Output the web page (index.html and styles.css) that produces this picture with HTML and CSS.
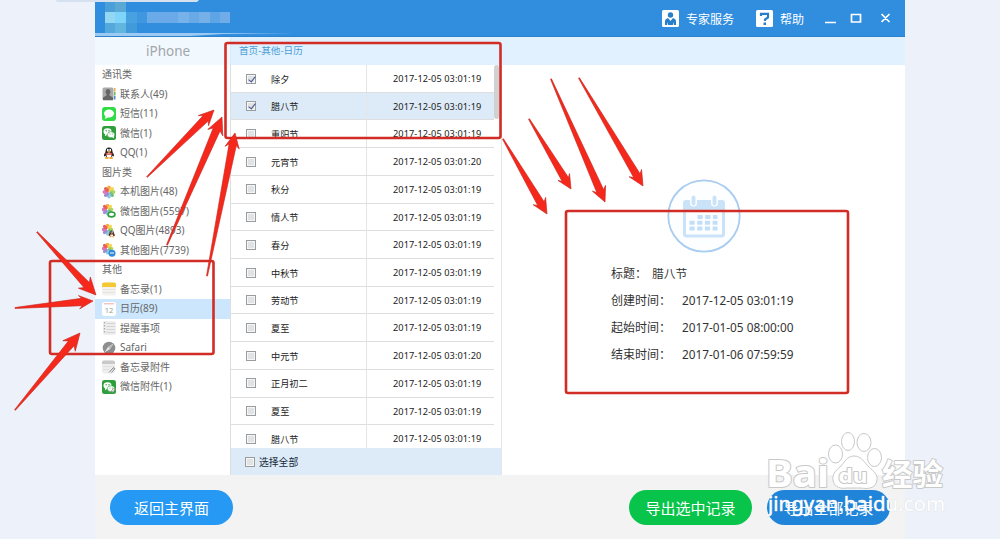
FILE: index.html
```html
<!DOCTYPE html>
<html lang="zh-CN">
<head>
<meta charset="utf-8">
<title>iPhone - 日历</title>
<link rel="stylesheet" href="styles.css">
</head>
<body>
<svg width="0" height="0" class="defs">
  <defs>
    <symbol id="contacts" viewBox="0 0 14 14"><rect x="0.5" y="0.5" width="11" height="13" rx="1.5" fill="#aaa"/><path d="M6 2a2.6 2.8 0 0 1 1.5 5v1.5l3.5 2V13H1v-2.500l3.500-2V7A2.600 2.800 0 0 1 6 2z" fill="#666"/><path d="M12 1h1.500v3.500H12z" fill="#e2b04a"/><path d="M12 5h1.500v3.500H12z" fill="#6db85d"/><path d="M12 9h1.500v3.500H12z" fill="#4a90c8"/></symbol>
    <symbol id="sms" viewBox="0 0 14 14"><rect width="14" height="14" rx="3" fill="#2fdc43"/><ellipse cx="7" cy="6.500" rx="5" ry="4" fill="#fff"/><path d="M3.500 9 3 12l3.500-2z" fill="#fff"/></symbol>
    <symbol id="wechat" viewBox="0 0 14 14"><rect width="14" height="14" rx="2.500" fill="#2e9f3c"/><ellipse cx="5.500" cy="5.500" rx="4" ry="3.300" fill="#fff"/><path d="M3 8v2.200L5.500 8.500z" fill="#fff"/><ellipse cx="9" cy="8.700" rx="3.700" ry="3" fill="#fff" stroke="#2e9f3c" stroke-width=".6"/><path d="M10 11l2 1.300V10z" fill="#fff"/><g fill="#2e9f3c"><circle cx="4.200" cy="4.800" r=".7"/><circle cx="7" cy="4.800" r=".7"/><circle cx="8" cy="8" r=".5"/><circle cx="10.300" cy="8" r=".5"/></g></symbol>
    <symbol id="qq" viewBox="0 0 14 14"><path d="M7 1.500c-2.600 0-3.600 2-3.500 4.500C2 8 1.700 9.500 2.200 10.500L3.500 9.800c.5 2 6.500 2 7 0l1.300.7c.5-1 .2-2.500-1.300-4.500.1-2.500-.9-4.500-3.500-4.500z" fill="#222"/><ellipse cx="7" cy="9" rx="2.500" ry="2.500" fill="#fff"/><path d="M3.500 6.500q3.500 2 7 0v1.400q-3.500 1.800-7 0z" fill="#e33b2e"/><ellipse cx="5.800" cy="4" rx=".9" ry="1.200" fill="#fff"/><ellipse cx="8.200" cy="4" rx=".9" ry="1.200" fill="#fff"/><ellipse cx="7" cy="5.700" rx="1.900" ry=".6" fill="#f6a623"/><ellipse cx="4.800" cy="12" rx="2" ry=".9" fill="#f6a623"/><ellipse cx="9.200" cy="12" rx="2" ry=".9" fill="#f6a623"/></symbol>
    <symbol id="photos" viewBox="0 0 14 14"><g opacity=".88"><ellipse cx="7" cy="3.500" rx="1.900" ry="2.900" fill="#f5a229"/><ellipse cx="7" cy="3.500" rx="1.900" ry="2.900" fill="#f3d13c" transform="rotate(45 7 7)"/><ellipse cx="7" cy="3.500" rx="1.900" ry="2.900" fill="#a5ce4a" transform="rotate(90 7 7)"/><ellipse cx="7" cy="3.500" rx="1.900" ry="2.900" fill="#55b96d" transform="rotate(135 7 7)"/><ellipse cx="7" cy="3.500" rx="1.900" ry="2.900" fill="#7cc2df" transform="rotate(180 7 7)"/><ellipse cx="7" cy="3.500" rx="1.900" ry="2.900" fill="#8a7fcf" transform="rotate(225 7 7)"/><ellipse cx="7" cy="3.500" rx="1.900" ry="2.900" fill="#d266b5" transform="rotate(270 7 7)"/><ellipse cx="7" cy="3.500" rx="1.900" ry="2.900" fill="#ea4b45" transform="rotate(315 7 7)"/></g></symbol>
    <symbol id="wxphotos" viewBox="0 0 14 14"><use href="#photos" x="-1" y="-1" width="13" height="13"/><ellipse cx="9.500" cy="10.500" rx="4.200" ry="3.200" fill="#2e9f3c"/><ellipse cx="9.500" cy="10.300" rx="2.700" ry="1.600" fill="#fff"/></symbol>
    <symbol id="qqphotos" viewBox="0 0 14 14"><use href="#photos" x="-1" y="-1" width="13" height="13"/><use href="#qq" x="5.500" y="5.500" width="8.500" height="8.500"/></symbol>
    <symbol id="otherphotos" viewBox="0 0 14 14"><use href="#photos" x="-1" y="-1" width="13" height="13"/><circle cx="10" cy="10.200" r="3.500" fill="#2f8bd8"/><path d="M8 9.500h4v1H8zM9 11.500h2" fill="#fff"/></symbol>
    <symbol id="notes" viewBox="0 0 14 14"><rect y=".5" width="14" height="13" rx="2" fill="#f4f2ed"/><path d="M0 5V2.500A2 2 0 0 1 2 .5h10a2 2 0 0 1 2 2V5z" fill="#f3c833"/><path d="M1 7.500h12M1 10.500h12" stroke="#ddd" stroke-width=".7"/></symbol>
    <symbol id="calendar" viewBox="0 0 14 14"><rect width="14" height="14" rx="2.500" fill="#fff"/><path d="M2 1.800h10" stroke="#efaaa5"/><text x="7" y="11" text-anchor="middle" class="cal-number">12</text></symbol>
    <symbol id="reminders" viewBox="0 0 14 14"><rect x="1" width="13" height="14" rx="2" fill="#eee"/><path d="M4.500 2.500H13M4.500 5.500H13M4.500 8.500H13M4.500 11.500H13" stroke="#ccc" stroke-width=".8"/><path d="M2.500 1v12" stroke="#aaa" stroke-width="1.300" stroke-dasharray="1.500 1.500"/></symbol>
    <symbol id="safari" viewBox="0 0 14 14"><circle cx="7" cy="7" r="6.300" fill="#8e8e8e"/><path d="M11.500 2.500 8 8 2.500 11.500 6 6z" fill="#e8e8e8"/><path d="M6 6l2 2 3.500-5.500z" fill="#bbb"/></symbol>
    <symbol id="noteclip" viewBox="0 0 14 14"><rect y=".5" width="13" height="13" rx="2" fill="#eee"/><path d="M0 4V2.500A2 2 0 0 1 2 .5h9a2 2 0 0 1 2 2V4z" fill="#c9c9c9"/><path d="M1 6.500h11M1 9.500h6" stroke="#d8d8d8" stroke-width=".7"/><path d="m7 12.500 4-4.500q1.500-.8 1.800.8L9.500 12.500" fill="none" stroke="#888"/></symbol>
    <symbol id="wxclip" viewBox="0 0 14 14"><use href="#wechat" width="14" height="14"/><path d="m8 12.500 3.500-4q1.500-.8 1.800.8L10.500 12.500" fill="none" stroke="#999"/></symbol>
  </defs>
</svg>

<div class="app">
  <header class="titlebar">
    <svg class="brand" width="202" height="37" viewBox="0 0 202 37">
      <path d="M10 0h10v12H10z" fill="#4a9fd9"/><path d="M20 0h11v12H20z" fill="#59a9d4"/>
      <path d="M10 12h10v11H10z" fill="#94d7f2"/><path d="M20 12h11v11H20z" fill="#7fd4fb"/>
      <path d="M31 12h11v11H31z" fill="#48a2e2"/><path d="M42 12h10v11H42z" fill="#3f98df"/>
      <path d="M52 12h31v11H52z" fill="#6aaae9"/><path d="M83 12h11v11H83z" fill="#77b2ea"/><path d="M94 12h10v11H94z" fill="#69aae6"/><path d="M104 12h11v11h-11z" fill="#75b0e9"/><path d="M115 12h10v11h-10z" fill="#5ea5e5"/><path d="M125 12h10v11h-10z" fill="#70ade8"/>
      <path d="M10 23h10v10H10z" fill="#53a8dc"/><path d="M20 23h11v10H20z" fill="#62b5df"/><path d="M31 23h11v10H31z" fill="#419ada"/>
      <path d="M0 33h200l-72 1-33 2H0z" fill="#9dcaf2"/>
    </svg>
    <nav class="actions">
      <svg width="17" height="17" viewBox="0 0 17 17"><rect width="17" height="17" rx="1.500" fill="#fff"/><circle cx="8.500" cy="5" r="2.700" fill="#277fc9"/><path d="M3 15V11q0-2 3-3l2.500 3L11 8q3 1 3 3v4h-2v-3l-1 3H6l-1-3v3z" fill="#277fc9"/></svg>
      <span class="expert">专家服务</span>
      <svg width="17" height="17" viewBox="0 0 17 17"><rect width="17" height="17" rx="1.500" fill="#fff"/><path d="M5 6V3.800h7v3.700L9 9.500V11" fill="none" stroke="#277fc9" stroke-width="2.200"/><path d="M7.500 12.500H10V15H7.500z" fill="#277fc9"/></svg>
      <span class="help">帮助</span>
      <svg class="window-controls" width="70" height="16" viewBox="0 0 70 16" fill="none" stroke="#fff" stroke-width="1.700"><path d="M1 11.500h11M27.500 3.500h9v7.500h-9zM57.500 3l8 8M65.500 3l-8 8"/></svg>
    </nav>
  </header>
  <div class="crumbs"><div class="device">iPhone</div><div class="path">首页-其他-日历</div></div>
  <main class="content">
    <aside class="sidebar">
      <h2>通讯类</h2>
      <a><svg><use href="#contacts"/></svg>联系人(49)</a>
      <a><svg><use href="#sms"/></svg>短信(11)</a>
      <a><svg><use href="#wechat"/></svg>微信(1)</a>
      <a><svg><use href="#qq"/></svg>QQ(1)</a>
      <h2>图片类</h2>
      <a><svg><use href="#photos"/></svg>本机图片(48)</a>
      <a><svg><use href="#wxphotos"/></svg>微信图片(5597)</a>
      <a><svg><use href="#qqphotos"/></svg>QQ图片(4893)</a>
      <a><svg><use href="#otherphotos"/></svg>其他图片(7739)</a>
      <h2>其他</h2>
      <a><svg><use href="#notes"/></svg>备忘录(1)</a>
      <a class="active"><svg><use href="#calendar"/></svg>日历(89)</a>
      <a><svg><use href="#reminders"/></svg>提醒事项</a>
      <a><svg><use href="#safari"/></svg>Safari</a>
      <a><svg><use href="#noteclip"/></svg>备忘录附件</a>
      <a><svg><use href="#wxclip"/></svg>微信附件(1)</a>
    </aside>
    <section class="records">
      <div class="list">
        <div class="rows">
          <div class="row"><i class="check on"></i><b>除夕</b><time>2017-12-05 03:01:19</time></div>
          <div class="row selected"><i class="check on"></i><b>腊八节</b><time>2017-12-05 03:01:19</time></div>
          <div class="row"><i class="check"></i><b>重阳节</b><time>2017-12-05 03:01:19</time></div>
          <div class="row"><i class="check"></i><b>元宵节</b><time>2017-12-05 03:01:20</time></div>
          <div class="row"><i class="check"></i><b>秋分</b><time>2017-12-05 03:01:19</time></div>
          <div class="row"><i class="check"></i><b>情人节</b><time>2017-12-05 03:01:19</time></div>
          <div class="row"><i class="check"></i><b>春分</b><time>2017-12-05 03:01:19</time></div>
          <div class="row"><i class="check"></i><b>中秋节</b><time>2017-12-05 03:01:19</time></div>
          <div class="row"><i class="check"></i><b>劳动节</b><time>2017-12-05 03:01:19</time></div>
          <div class="row"><i class="check"></i><b>夏至</b><time>2017-12-05 03:01:19</time></div>
          <div class="row"><i class="check"></i><b>中元节</b><time>2017-12-05 03:01:20</time></div>
          <div class="row"><i class="check"></i><b>正月初二</b><time>2017-12-05 03:01:19</time></div>
          <div class="row"><i class="check"></i><b>夏至</b><time>2017-12-05 03:01:19</time></div>
          <div class="row"><i class="check"></i><b>腊八节</b><time>2017-12-05 03:01:19</time></div>
        </div>
        <div class="scrollbar"></div>
      </div>
      <div class="select-all"><i class="check"></i>选择全部</div>
    </section>
    <section class="detail">
      <svg class="emblem" width="74" height="74" viewBox="0 0 74 74"><circle cx="37" cy="37" r="35.700" fill="#fcfeff" stroke="#a9cdf0" stroke-width="1.800"/><rect x="17.500" y="23" width="39" height="34" rx="2" fill="none" stroke="#cbe3f8" stroke-width="3"/><path d="M16 31v-7q0-3 3-3h36q3 0 3 3v7z" fill="#cbe3f8"/><g stroke-linecap="round"><path d="M26.500 19v5M47.500 19v5" stroke="#fcfeff" stroke-width="7"/><path d="M26.500 18.500v6M47.500 18.500v6" stroke="#cbe3f8" stroke-width="4"/></g><path d="M30.500 38h20M22.500 43.700h28M22.500 49.500h28" stroke="#c3dff7" stroke-width="4" stroke-dasharray="5.200 2.500"/></svg>
      <dl>
        <div class="title-line"><dt>标题：</dt><dd>腊八节</dd></div>
        <div><dt>创建时间：</dt><dd>2017-12-05 03:01:19</dd></div>
        <div><dt>起始时间：</dt><dd>2017-01-05 08:00:00</dd></div>
        <div><dt>结束时间：</dt><dd>2017-01-06 07:59:59</dd></div>
      </dl>
    </section>
  </main>
  <footer class="footer">
    <button class="back">返回主界面</button>
    <button class="export-selected">导出选中记录</button>
    <button class="export-all">导出全部记录</button>
  </footer>
</div>

<svg class="annotations" width="1000" height="539" viewBox="0 0 1000 539">
  <path d="M55 0h144l-2 2H58z" fill="#d5e1ee"/>
  <g class="frames"><rect x="225.500" y="43" width="275" height="95" rx="2"/><rect x="50" y="261" width="163.500" height="93" rx="2"/><rect x="566" y="211" width="282" height="182" rx="2"/></g>
  <g id="arrows" fill="#f6281c" stroke="#c5281f" stroke-width=".6"></g>
  <g class="watermark">
    <text x="766" y="487" class="wm-name" textLength="63" lengthAdjust="spacingAndGlyphs">Bai</text>
    <g fill="#fff" stroke="#c8c8c8"><ellipse cx="835.500" cy="454" rx="7" ry="9"/><ellipse cx="848" cy="441.500" rx="6.500" ry="9"/><ellipse cx="864" cy="442.500" rx="7" ry="9"/><ellipse cx="874.500" cy="457.500" rx="7" ry="9"/><path d="M854 456c-7 0-9 6-14 11-5 4-8 8-7 13 1 8 9 9 14 8h14c6 1 15 1 16-8 1-6-4-9-8-13-5-5-8-11-15-11z"/></g>
    <text x="838.500" y="483" class="wm-du" textLength="29" lengthAdjust="spacingAndGlyphs">du</text>
    <text x="882" y="485" class="wm-cn" textLength="61" lengthAdjust="spacingAndGlyphs">经验</text>
    <text x="768" y="511" class="wm-url" textLength="177" lengthAdjust="spacingAndGlyphs">jingyan.baidu.com</text>
  </g>
</svg>
<script src="arrows.js"></script>
</body>
</html>
```
FILE: styles.css
```css
* { box-sizing: border-box; }
body { margin: 0; width: 1000px; height: 539px; overflow: hidden; position: relative; background: #edf1f9; font-family: "Noto Sans", "Noto Sans CJK SC", sans-serif; }
.defs { position: absolute; }
.app { width: 810px; height: 539px; margin-left: 95px; display: flex; flex-direction: column; background: #fff; }
.titlebar { height: 37px; flex: none; display: flex; justify-content: space-between; background: #318edf; border-bottom: 1px solid #2b81cb; }
.brand { flex: none; }
.actions { display: flex; align-items: center; height: 37px; padding-right: 11px; color: #fff; font-size: 12px; }
.expert { margin: 0 22px 0 7px; }
.help { margin: 0 20px 0 7px; }
.window-controls { margin-top: 1px; }
.crumbs { height: 28px; flex: none; display: flex; line-height: 28px; }
.device { width: 135px; background: #f1f8fe; color: #a3a6aa; font-size: 13.5px; padding-left: 51px; }
.path { flex: 1; background: #e1f1ff; color: #4b9dd5; font-size: 9.600px; padding-left: 8px; border-left: 1px solid #dce8f2; }
.content { height: 410px; flex: none; display: flex; }
.sidebar { width: 135px; color: #666; font-size: 10px; white-space: nowrap; }
.sidebar h2 { margin: 0; height: 19.500px; line-height: 19.500px; padding-left: 7px; font-size: 10px; font-weight: 400; }
.sidebar a { display: flex; align-items: center; gap: 4px; height: 19.500px; line-height: 19.500px; padding-left: 7px; }
.sidebar a svg { width: 14px; height: 14px; flex: none; }
.sidebar .active { background: #cce7fd; }
.cal-number { font: 7.500px "Noto Sans", sans-serif; fill: #999; }
.records { width: 272px; display: flex; flex-direction: column; border-left: 1px solid #dedede; border-right: 1px solid #e3e5e7; }
.list { height: 383px; display: flex; overflow: hidden; }
.rows { width: 263px; }
.row { display: grid; grid-template-columns: 40px 95px 128px; align-items: center; height: 27.720px; border-bottom: 1px solid #dedede; color: #222; font-size: 9.200px; }
.row.selected { background: #dcebf7; }
.row b { font-weight: 400; }
.row time { padding-left: 26px; border-left: 1px solid #e5e5e5; height: 100%; line-height: 27px; white-space: nowrap; letter-spacing: .08px; }
.check { display: block; width: 10px; height: 10px; margin-left: 15px; border: 1px solid #9a9da0; background: #e1e2e3; box-shadow: inset 0 0 0 1px #f6f6f6; }
.check.on::after { content: ""; display: block; width: 3px; height: 6px; margin: 0 0 0 3px; border: solid #45558e; border-width: 0 1.500px 1.500px 0; transform: rotate(38deg); }
.scrollbar { width: 5px; height: 54px; border-radius: 3px; background: #d0d1d3; margin-left: 0; }
.select-all { height: 27px; display: flex; align-items: center; gap: 4px; background: #dcebf7; color: #17293b; font-size: 9.800px; }
.select-all .check { margin-left: 14px; }
.detail { flex: 1; padding-top: 114px; color: #333; font-size: 12px; }
.emblem { display: block; margin-left: 165px; }
.detail dl { margin: 6px 0 0 109px; }
.detail dl div { display: flex; height: 27px; align-items: center; }
.detail dt { width: 71px; }
.detail .title-line dt { width: 41px; }
.detail dd { margin: 0; white-space: nowrap; }
.detail dd { font-size: 11.800px; }
.footer { height: 64px; display: flex; align-items: center; background: #f3f3f3; padding-left: 15px; }
.footer button { width: 123px; height: 35px; padding: 0; border: 0; border-radius: 18px; color: #fff; font: 15px "Noto Sans", "Noto Sans CJK SC", sans-serif; background: #2599f3; }
.footer .export-selected { margin-left: 396px; background: #08c44a; }
.footer .export-all { margin-left: 15px; background: #2085d9; }
.annotations { position: absolute; top: 0; left: 0; }
.frames { fill: none; stroke: #d12c26; stroke-width: 2.600; }
.watermark text { fill: #fff; paint-order: stroke; stroke: #c8c8c8; stroke-width: 2px; stroke-linejoin: round; }
.watermark .wm-name { font: 700 38px "Noto Sans", sans-serif; }
.watermark .wm-du { font: 700 20px "Noto Sans", sans-serif; }
.watermark .wm-cn { font: 700 30px "Noto Sans CJK SC", sans-serif; }
.watermark .wm-url { font: 400 19px "Noto Sans", sans-serif; stroke: #d5dce3; stroke-width: .6px; }
```
FILE: arrows.js
```js
// Each arrow runs from a pointed tail to its tip: x1, y1, x2, y2, head length.
const arrows = [
  [147, 177, 214, 110, 15], [167, 245, 222, 117, 17], [207, 276, 235, 133, 15],
  [37, 232, 96, 295, 17], [15, 308, 93, 301, 14], [15, 410, 80, 333, 17],
  [503, 139, 547, 214, 15], [529, 119, 571, 189, 14], [551, 79, 605, 202, 15], [579, 78, 643, 186, 15]
];
const layer = document.getElementById("arrows");
for (const [x1, y1, x2, y2, head] of arrows) {
  const length = Math.hypot(x2 - x1, y2 - y1);
  const angle = Math.atan2(y2 - y1, x2 - x1) * 180 / Math.PI;
  const half = head * 0.48;
  const shape = document.createElementNS("http://www.w3.org/2000/svg", "path");
  const neck = length - head * 0.8;
  shape.setAttribute("d", `M0 -.5L${neck} -3.700L${length - head} ${-half}L${length} 0L${length - head} ${half}L${neck} 3.700L0 .5Z`);
  shape.setAttribute("transform", `translate(${x1} ${y1}) rotate(${angle})`);
  layer.appendChild(shape);
}
```
